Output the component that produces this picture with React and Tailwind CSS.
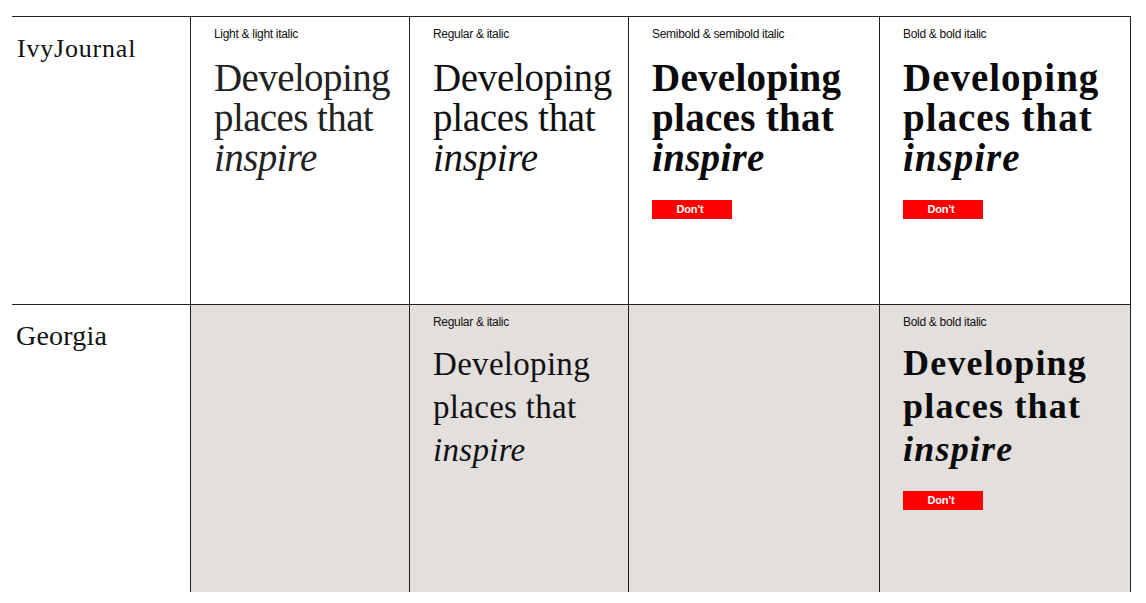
import React from "react";

const serif = "font-['Liberation_Serif','Times_New_Roman',serif]";
const sans = "font-['Liberation_Sans',Arial,sans-serif]";

function Label({ children }) {
  return (
    <div className={`${sans} text-[12px] leading-[16px] tracking-[-0.3px] text-[#111]`}>
      {children}
    </div>
  );
}

function Dont() {
  return (
    <div
      className={`${sans} flex h-[19px] w-[80px] items-center justify-center bg-[#ff0000] pr-[4px] text-[11px] font-bold leading-none tracking-[-0.2px] text-white`}
    >
      Don’t
    </div>
  );
}

function Cell({ children, gray, last }) {
  return (
    <div
      className={`border-l border-[#222] pl-[23px] pr-[20px] pt-[9px] ${gray ? "bg-[#e3dfdd]" : "bg-white"} ${last ? "border-r" : ""}`}
    >
      {children}
    </div>
  );
}

export default function App() {
  return (
    <div className="min-h-[603px] bg-white pt-[16px] pl-[12px]">
      <div className="w-[1119px]">
        {/* Row 1: IvyJournal */}
        <div className="grid h-[288px] grid-cols-[178px_219px_219px_251px_252px] border-t border-[#222]">
          <div className={`${serif} pl-[5px] pt-[16px] text-[26px] leading-[32px] tracking-[0.8px] text-[#111]`}>
            IvyJournal
          </div>
          <Cell>
            <Label>Light &amp; light italic</Label>
            <div className={`${serif} mt-[16px] text-[39px] font-light leading-[40px] tracking-[-0.6px] text-[#222]`}>
              <div>Developing</div>
              <div>places that</div>
              <div className="italic">inspire</div>
            </div>
          </Cell>
          <Cell>
            <Label>Regular &amp; italic</Label>
            <div className={`${serif} mt-[16px] text-[39px] font-normal leading-[40px] tracking-[-0.3px] text-[#111]`}>
              <div>Developing</div>
              <div>places that</div>
              <div className="italic">inspire</div>
            </div>
          </Cell>
          <Cell>
            <Label>Semibold &amp; semibold italic</Label>
            <div className={`${serif} mt-[16px] text-[39px] font-semibold leading-[40px] tracking-[0.3px] text-[#0a0a0a]`}>
              <div>Developing</div>
              <div>places that</div>
              <div className="italic">inspire</div>
            </div>
            <div className="mt-[22px]">
              <Dont />
            </div>
          </Cell>
          <Cell last>
            <Label>Bold &amp; bold italic</Label>
            <div className={`${serif} mt-[16px] text-[39px] font-bold leading-[40px] tracking-[1px] text-[#0a0a0a]`}>
              <div>Developing</div>
              <div>places that</div>
              <div className="italic">inspire</div>
            </div>
            <div className="mt-[22px]">
              <Dont />
            </div>
          </Cell>
        </div>

        {/* Row 2: Georgia */}
        <div className="grid h-[288px] grid-cols-[178px_219px_219px_251px_252px] border-t border-[#222]">
          <div className={`${serif} pl-[4px] pt-[15px] text-[28px] leading-[32px] tracking-[0.2px] text-[#111]`}>
            Georgia
          </div>
          <Cell gray />
          <Cell gray>
            <Label>Regular &amp; italic</Label>
            <div className={`${serif} mt-[13px] text-[33px] leading-[43px] tracking-[0.3px] text-[#111]`}>
              <div>Developing</div>
              <div>places that</div>
              <div className="italic">inspire</div>
            </div>
          </Cell>
          <Cell gray />
          <Cell gray last>
            <Label>Bold &amp; bold italic</Label>
            <div className={`${serif} mt-[12px] text-[36px] font-bold leading-[43px] tracking-[1.2px] text-[#0a0a0a]`}>
              <div>Developing</div>
              <div>places that</div>
              <div className="italic">inspire</div>
            </div>
            <div className="mt-[20px]">
              <Dont />
            </div>
          </Cell>
        </div>
      </div>
    </div>
  );
}
